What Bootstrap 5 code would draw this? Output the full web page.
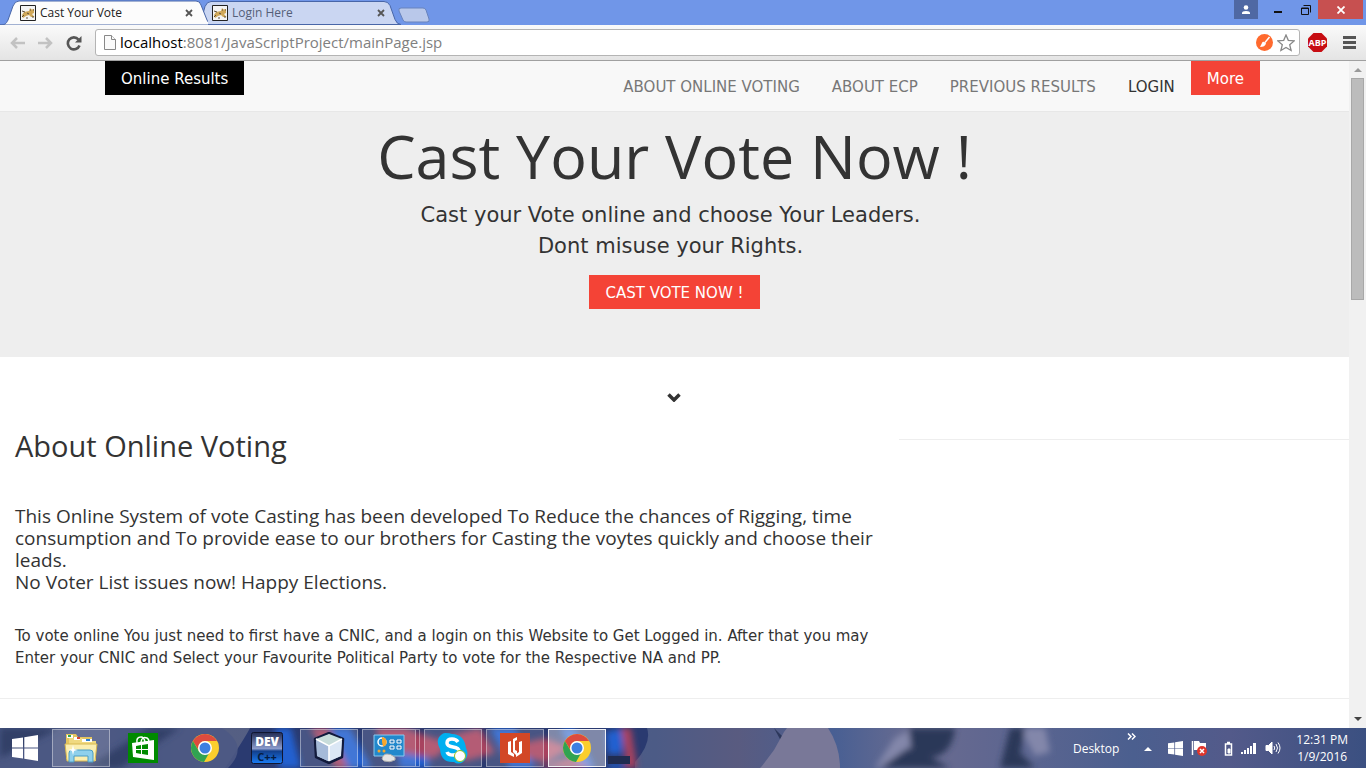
<!DOCTYPE html>
<html lang="en">
<head>
<meta charset="utf-8">
<meta name="viewport" content="width=device-width, initial-scale=1">
<title>Cast Your Vote</title>
<link rel="stylesheet" href="https://cdn.jsdelivr.net/npm/bootstrap@5.3.0/dist/css/bootstrap.min.css">
<style>
:root{--ui:"Open Sans","Noto Sans",sans-serif;--read:"DejaVu Sans",Verdana,sans-serif;--red:#f44336}
body{font-family:var(--read);font-size:15px;line-height:22px;color:#333;background:#fff}
svg{display:block;flex-shrink:0}
button{border:0;background:none;padding:0;color:inherit}
a{text-decoration:none;color:inherit}

/* window frame */
.tabstrip{background:#7096e8;height:25px;font:12px/16px var(--ui)}
.tab{width:208px;height:25px;margin-right:-16px;padding:5px 15px 0 20px;color:#222;isolation:isolate}
.tab.idle{color:#555f78}
.tab.front{z-index:2}
.tab .shape{position:absolute;left:0;top:0;z-index:-1}
.newtab{margin:5px 0 0 14px}
.winbtn{width:24px;height:19px;display:flex;align-items:center;justify-content:center}
.winbtn.person{background:#4f68a3}
.winbtn.shut{width:45px;background:#c75050}
.winset{padding-right:3px}
.toolbar{height:36px;background:linear-gradient(#fafafa,#e4e4e4);border-bottom:1px solid #a0a0a0;padding:0 10px}
.address{height:27px;border:1px solid #b4b4b4;border-radius:3px;background:#fff}
.address .url{font:15px/20px var(--ui);color:#808080;padding-bottom:2px}
.address .url b{font-weight:400;color:#000}

/* page */
.sitenav{height:51px;background:#f8f8f8;border-bottom:1px solid #e7e7e7;padding:0 89px 0 105px}
.flatbtn{height:34px;padding:2px 16px 0;border-radius:0;line-height:32px;color:#fff;background:var(--red)}
.flatbtn.dark{background:#000}
.sitenav .link{padding:15px 16px 0;color:#777}
.sitenav .link.now{color:#333}
.hero{background:#eee;height:245px;padding-top:6px}
.hero h1{font:400 61px/76px var(--ui);margin:0 0 6px}
.hero .say{font-size:21px;line-height:31px;margin:0 8px 13px 0}
.downmark{padding:36px 0 0 667px}
.about{padding:22px 15px 0}
.about h2{font:400 29px/44px var(--ui);margin:0 0 37px}
.about h4{font:400 19px/22px var(--ui);margin:0 0 32px}
.about p{margin:0 0 29px}
.rule{border-top:1px solid #eee}
.siderule{padding-top:37px}
.track{width:17px;background:#f1f1f1}
.track .thumb{width:13px;height:222px;background:#bcbcbc;border:1px solid #a8a8a8}

/* taskbar */
.taskbar{height:40px;color:#fff;font:12px/17px var(--ui);background:#46557f;isolation:isolate}
.taskbar .scene{position:absolute;inset:0;width:100%;height:100%;z-index:-1}
.start{width:52px;padding-left:12px}
.task{width:58px;height:38px;display:flex;align-items:center;justify-content:center}
.task.open{border:1px solid #ffffff66;background:#ffffff24}
.task.active{border:1px solid #ffffffdd;background:#ffffff66}
.task.paired{width:54px}
.stack{width:4px;height:38px;border:1px solid #ffffff66;border-left:0}
.clock{margin:0 18px 0 15px}
</style>
</head>
<body class="vh-100 d-flex flex-column overflow-hidden">

<svg width="0" height="0" class="position-absolute" aria-hidden="true">
  <symbol id="tomcat" viewBox="0 0 16 16"><path fill="#f4f4f4" stroke="#222" d="M.5.5h15v15H.5z"/><path d="M2 10l2-3 5-1 1-3 1.500 1.500L14 4v4l-2 1 2.500 3H11l-2-2-3 1-3 2z" fill="#d0a85a"/><path d="M2 6l3 1M2 12l2-2M10 5h1m2 0h1M7 8l2 1M12 12h2M6 13h2" stroke="#5a4d3a" fill="none"/></symbol>
  <symbol id="cross" viewBox="0 0 8 8"><path d="M1 1l6 6M7 1L1 7" stroke="#555" stroke-width="1.800"/></symbol>
  <symbol id="chrome" viewBox="0 0 30 30"><circle cx="15" cy="15" r="14" fill="#fbce2d"/><path d="M2.9 8A14 14 0 0 1 27.100 8H15a7 7 0 0 0-6.500 9z" fill="#dd4b3e"/><path d="M2.900 8A14 14 0 0 0 14 29l6-10.500a7 7 0 0 1-11.500-1z" fill="#31a352"/><circle cx="15" cy="15" r="7" fill="#fff"/><circle cx="15" cy="15" r="5.500" fill="#3c7fe0"/></symbol>
  <symbol id="win" viewBox="0 0 26 26"><path fill="#fff" d="M0 4l11-1.600V12.400H0zM12.300 2.200L26 0v12.400H12.300zM0 13.600h11v10L0 22zM12.300 13.600H26V26l-13.700-2.200z"/></symbol>
</svg>

<header>
  <div class="tabstrip d-flex">
    <div class="d-flex flex-grow-1">
      <button class="tab front position-relative d-flex align-items-start text-start">
        <svg class="shape" width="208" height="25"><path d="M0 25c5 0 6-1 8-5l5-14q2-5 6-5h177q4 0 5 4l6 15q2 5 5 5z" fill="#fcfcfc" stroke="#4866a8"/></svg>
        <svg width="16" height="16"><use href="#tomcat"/></svg><span class="ms-1 flex-grow-1">Cast Your Vote</span><svg width="8" height="8" class="mt-1"><use href="#cross"/></svg>
      </button>
      <button class="tab idle position-relative d-flex align-items-start text-start">
        <svg class="shape" width="210" height="25"><path d="M8 24.500l5-18q2-5 6-5h173q4 0 6 4l5 14q2 5 6 5z" fill="#cad6f2" stroke="#4866a8"/></svg>
        <svg width="16" height="16"><use href="#tomcat"/></svg><span class="ms-1 flex-grow-1">Login Here</span><svg width="8" height="8" class="mt-1"><use href="#cross"/></svg>
      </button>
      <button class="newtab" aria-label="New tab"><svg width="32" height="16"><path d="M3 1h22q2 0 3 2l3 9q1 3-2 3H8q-2 0-3-2L1 4q-1-3 2-3z" fill="#b9c8ea" stroke="#6883bd"/></svg></button>
    </div>
    <div class="winset d-flex">
      <button class="winbtn person me-2" aria-label="Profile"><svg width="10" height="10"><circle cx="5" cy="2.500" r="2.300" fill="#fff"/><path d="M1 9V8q0-2 4-2t4 2v1z" fill="#fff"/></svg></button>
      <button class="winbtn" aria-label="Minimize"><svg width="8" height="6"><path d="M0 4h8v2H0z" fill="#111"/></svg></button>
      <button class="winbtn ms-1" aria-label="Restore"><svg width="10" height="10" fill="none" stroke="#111"><path d="M.5 3h7v6.500h-7z"/><path d="M.5 3.500h7M2.500.5h7v7"/></svg></button>
      <button class="winbtn shut" aria-label="Close"><svg width="8" height="8"><path d="M.5.5l7 7M7.500.5l-7 7" stroke="#fff" stroke-width="1.800"/></svg></button>
    </div>
  </div>
  <div class="toolbar d-flex align-items-center">
    <button aria-label="Back"><svg width="16" height="12" fill="none" stroke="#c2c2c2" stroke-width="2.500"><path d="M15 6H2M7 1L2 6l5 5"/></svg></button>
    <button class="ms-2 ps-1" aria-label="Forward"><svg width="16" height="12" fill="none" stroke="#c2c2c2" stroke-width="2.500"><path d="M0 6h13M8 1l5 5-5 5"/></svg></button>
    <button class="ms-2 ps-1 me-1" aria-label="Reload"><svg width="17" height="16"><path d="M13.500 10.500A6 6 0 1 1 12.500 4.500" fill="none" stroke="#555" stroke-width="2.600"/><path d="M15.500 1v6.500H9z" fill="#555"/></svg></button>
    <div class="address d-flex align-items-center flex-grow-1 px-1 ms-2">
      <svg width="12" height="15" class="ms-1 me-1" fill="#fafafa" stroke="#888"><path d="M.5.5h7l4 4v10H.5z"/><path d="M7.500.5v4h4"/></svg>
      <span class="url flex-grow-1"><b>localhost</b>:8081/JavaScriptProject/mainPage.jsp</span>
      <svg width="17" height="17"><circle cx="8.500" cy="8.500" r="8.500" fill="#ff6a2e"/><path d="M13.500 3L9 8.500" stroke="#fff" stroke-width="1.500"/><path d="M4 13l2.500-5q2-1 3.500 1.500Q9 13 4 13z" fill="#fff"/></svg>
      <svg width="18" height="18" class="ms-1"><path d="M9 1l2.300 5.300 5.900.6-4.500 3.800 1.400 5.800L9 13.400l-5.100 3.100 1.400-5.800L.8 6.900l5.900-.6z" fill="#fff" stroke="#888" stroke-width="1.300"/></svg>
    </div>
    <button class="ms-2" aria-label="Ad blocker"><svg width="19" height="19"><path d="M5.500 0h8L19 5.500v8L13.500 19h-8L0 13.500v-8z" fill="#c70d12"/><text x="9.500" y="13" text-anchor="middle" font-family="Open Sans" font-size="9" font-weight="700" fill="#fff">ABP</text></svg></button>
    <button class="ms-3" aria-label="Menu"><svg width="13" height="13" fill="#555"><path d="M0 0h13v3H0zM0 5h13v3H0zM0 10h13v3H0z"/></svg></button>
  </div>
</header>

<div class="d-flex flex-grow-1 overflow-hidden">
  <main class="flex-grow-1">
    <nav class="sitenav d-flex justify-content-between align-items-start">
      <button class="flatbtn dark">Online Results</button>
      <div class="d-flex align-items-start">
        <a class="link" href="#about">ABOUT ONLINE VOTING</a>
        <a class="link" href="#ecp">ABOUT ECP</a>
        <a class="link" href="#previous">PREVIOUS RESULTS</a>
        <a class="link now" href="#login">LOGIN</a>
        <button class="flatbtn">More</button>
      </div>
    </nav>
    <section class="hero text-center">
      <h1>Cast Your Vote Now !</h1>
      <p class="say">Cast your Vote online and choose Your Leaders.<br>Dont misuse your Rights.</p>
      <button class="flatbtn">CAST VOTE NOW !</button>
    </section>
    <div class="downmark"><svg width="14" height="9"><path d="M1.500 1.500L7 7l5.500-5.500" fill="none" stroke="#333" stroke-width="3.500"/></svg></div>
    <div class="row g-0">
      <section class="col-8 about" id="about">
        <h2>About Online Voting</h2>
        <h4>This Online System of vote Casting has been developed To Reduce the chances of Rigging, time consumption and To provide ease to our brothers for Casting the voytes quickly and choose their leads.<br>No Voter List issues now! Happy Elections.</h4>
        <p>To vote online You just need to first have a CNIC, and a login on this Website to Get Logged in. After that you may Enter your CNIC and Select your Favourite Political Party to vote for the Respective NA and PP.</p>
      </section>
      <div class="col-4 siderule"><div class="rule"></div></div>
    </div>
    <div class="rule"></div>
  </main>
  <div class="track d-flex flex-column align-items-center flex-shrink-0 py-1">
    <svg width="8" height="13"><path d="M0 7l4-4 4 4z" fill="#999"/></svg>
    <div class="thumb flex-shrink-0"></div>
    <svg width="8" height="10" class="mt-auto"><path d="M0 3h8L4 7z" fill="#444"/></svg>
  </div>
</div>

<footer class="taskbar position-relative d-flex align-items-center flex-shrink-0">
  <svg class="scene" viewBox="0 0 1366 40" preserveAspectRatio="none" aria-hidden="true">
    <defs>
      <linearGradient id="sky"><stop stop-color="#34466f"/><stop offset=".06" stop-color="#4c5984"/><stop offset=".11" stop-color="#3d4b75"/><stop offset=".16" stop-color="#555f83"/><stop offset=".48" stop-color="#4c5b86"/><stop offset=".54" stop-color="#595b80"/><stop offset=".61" stop-color="#485f93"/><stop offset=".67" stop-color="#6a6c90"/><stop offset=".72" stop-color="#616790"/><stop offset=".83" stop-color="#4b5f8f"/><stop offset=".9" stop-color="#535a8a"/><stop offset="1" stop-color="#3b5081"/></linearGradient>
      <filter id="soft" x="-20%" y="-50%" width="140%" height="200%"><feGaussianBlur stdDeviation="3"/></filter>
    </defs>
    <path d="M0 0h1366v40H0z" fill="url(#sky)"/>
    <path d="M0 40h225Q245 10 250 0h397q5 15-12 34v6z" fill="#2a3a70"/>
    <path d="M0 40h228Q250 18 222 0H0z" fill="#4c5984" opacity=".9"/>
    <g filter="url(#soft)">
      <path d="M85 40L150 0h30l-60 40zM0 0h60L0 30z" fill="#303f68"/>
      <path d="M275 0h16l10 40h-22zM330 0h20l22 40h-25zM395 10l30 5 5 25h-30zM490 0h25l20 40h-25zM560 0h15l20 40h-15zM606 4l18-4-2 26h-14zM608 35h16v5h-16z" fill="#2461d0"/>
      <path d="M310 0h18l20 40h-12zM375 0h30l45 16-15 14-50-8zM440 10l40-10 15 25-30 8zM500 20l45-10 25 10-25 15zM535 40l35-10 20 10zM621 0h10l6 40h-12v-16z" fill="#a8435f"/>
      <path d="M895 10l15-8 5 20-20 18h-20zM1020 0h25l5 24-15 4z" fill="#8387aa"/>
      <path d="M909 0h46q-3 30-30 30-12 0-14-10zM880 40l28-20 20 8 22 12zM1010 0h15l-5 25 15 15h-35z" fill="#293858"/>
    </g>
    <path d="M774 0l9 9-2 4z" fill="#2d385c"/>
    <path d="M762 38l12-16 10-18 3-4h41q12 18 12 40h-80z" fill="#797898"/>
    <path d="M608 28h22v8h-22z" fill="#202c50"/>
  </svg>
  <button class="start" aria-label="Start"><svg width="26" height="26"><use href="#win"/></svg></button>
  <div class="d-flex flex-grow-1 gap-1">
    <button class="task open" aria-label="File Explorer"><svg width="34" height="30"><path d="M2 1h10l2 3h14v22H2z" fill="#e3c45f"/><path d="M3 2h6v3H3z" fill="#fff"/><path d="M4 2h3v2H4z" fill="#2fa84f"/><path d="M8 5h10l2 3h12v20H5V5z" fill="#f0d980"/><path d="M10 4h6v3h-6z" fill="#fff"/><path d="M13 4h3v2h-3z" fill="#d8452e"/><path d="M18 6h10v3H18z" fill="#fff"/><path d="M22 6h4v2h-4z" fill="#2d7fd0"/><path d="M1 11h32l-2 17H3z" fill="#fbeeb0" stroke="#d8b850"/><path d="M5 29V20q0-3 3-3h18q3 0 3 3v9h-5v-6H10v6z" fill="#8fd0ec" stroke="#4a9cc4"/><path d="M9 12l1 4 4 1-4 1-1 4-1-4-4-1 4-1z" fill="#fff"/></svg></button>
    <button class="task" aria-label="Store"><svg width="30" height="30"><path d="M0 0h30v30H0z" fill="#008a00"/><path d="M4 10l22-3v20L5 24z" fill="#fff"/><path d="M9 10q-1-6 4-6 3 0 4 5M13 9q1-6 6-4 2 1 2 4" fill="none" stroke="#fff" stroke-width="1.500"/><path d="M8 13l5-1v4H8zm6-1l6-1v5h-6zM8 17h5v4l-5-1zm6 0h6v5l-6-1z" fill="#008a00"/></svg></button>
    <button class="task" aria-label="Chrome"><svg width="30" height="30"><use href="#chrome"/></svg></button>
    <button class="task" aria-label="Dev-C++"><svg width="32" height="32"><defs><linearGradient id="dev" x2="0" y2="1"><stop stop-color="#222c55"/><stop offset=".52" stop-color="#8b9ccc"/><stop offset=".6" stop-color="#123f8c"/><stop offset="1" stop-color="#1a7cf5"/></linearGradient></defs><rect x=".5" y=".5" width="31" height="31" rx="2" fill="url(#dev)" stroke="#101630"/><text x="16" y="14" text-anchor="middle" font-family="Open Sans" font-size="12" font-weight="800" fill="#fff">DEV</text><text x="16" y="29" text-anchor="middle" font-family="Open Sans" font-size="11" font-weight="700" fill="#051c40">C++</text></svg></button>
    <button class="task open" aria-label="NetBeans"><svg width="32" height="32"><path d="M16 1l14 6-1 18-13 6L3 25 2 7z" fill="#b8cae0" stroke="#111a3c" stroke-width="2.500" stroke-linejoin="round"/><path d="M16 2l13 5-13 7L3 7z" fill="#c7dcda"/><path d="M3 8l12 6v15L4 24z" fill="#a5bad9"/><path d="M29 8l-13 6v15l12-5z" fill="#dbe7f5"/><path d="M3 7l13 7 13-7M16 14v15" fill="none" stroke="#fff" stroke-width="1.500"/></svg></button>
    <div class="d-flex"><button class="task open paired" aria-label="Control Panel"><svg width="32" height="30"><path d="M1 2h30v21H1z" fill="#2288cc" stroke="#8ac9ef"/><circle cx="9" cy="9" r="4" fill="none" stroke="#fff" stroke-width="1.500"/><path d="M9 9V4a5 5 0 0 1 1 9.800z" fill="#f5a62c"/><path d="M17 7h4v3h-4zm7 0h4v3h-4zm-7 6h4v3h-4zm7 0h4v3h-4z" fill="#2a7ab8" stroke="#fff"/><circle cx="6" cy="18" r="1.500" fill="#f5a62c"/><circle cx="11" cy="18" r="1.500" fill="#f5a62c"/><path d="M9 26q1-5 5-5t6 2q3 1 2 4-5 3-11 1z" fill="#e4e4e4" stroke="#aaa"/></svg></button><span class="stack"></span></div>
    <button class="task open" aria-label="Skype"><svg width="32" height="32"><path d="M8 1q5 0 7 1 12 0 14 14 4 8-3 14-5 3-9 0Q4 31 3 17-2 8 4 3q2-2 4-2z" fill="#00aff0"/><path d="M21 10q-2-3-6-3-5 0-5 4 0 3 6 4t6 4q0 4-6 4-5 0-6-3" fill="none" stroke="#fff" stroke-width="3.500"/><circle cx="23" cy="24" r="5.500" fill="#fff" stroke="#8fc31f"/></svg></button>
    <button class="task open" aria-label="Reader"><svg width="30" height="30"><path d="M0 0h30v30H0z" fill="#d24726"/><path d="M8 9l3-1v11l3 2v3l-6-3zM13 6l4-2v3l-2 1v9l2 1v5l-4-4zM19 9l3-1v12l-6 4v-3l3-2z" fill="#fff"/></svg></button>
    <button class="task active" aria-label="Chrome window"><svg width="30" height="30"><use href="#chrome"/></svg></button>
  </div>
  <span>Desktop</span>
  <svg width="9" height="7" class="ms-2 mb-4" fill="none" stroke="#fff" stroke-width="1.500"><path d="M1 .5l3 3-3 3M5 .5l3 3-3 3"/></svg>
  <svg width="8" height="5" class="ms-2 me-3"><path d="M0 5l4-4 4 4z" fill="#fff"/></svg>
  <svg width="15" height="15"><use href="#win"/></svg>
  <svg width="17" height="16" class="ms-2"><path d="M1.500 1v14" stroke="#fff" stroke-width="1.500"/><path d="M3 1h5l1 2h6v7H3z" fill="#fff"/><circle cx="11" cy="11" r="5" fill="#e0352b"/><path d="M9 9l4 4m0-4l-4 4" stroke="#fff" stroke-width="1.500"/></svg>
  <svg width="9" height="15" class="ms-3" fill="none" stroke="#fff"><path d="M3 1.500h3M1.500 3h6v11h-6z" stroke-width="1.500"/><path d="M4 8h2v4H4z" fill="#fff"/></svg>
  <svg width="16" height="12" class="ms-2" fill="#fff"><path d="M0 10h2v2H0zM3 8h2v4H3zM6 6h2v6H6zM9 4h2v8H9zM12 1h3v11h-3z"/></svg>
  <svg width="16" height="14" class="ms-2" fill="none" stroke="#fff"><path d="M1 4.500h2.500L7 1v12L3.500 9.500H1z" fill="#fff"/><path d="M9 5q1.500 2 0 4M11 3q3 4 0 8M13 1.500q4 5.500 0 11"/></svg>
  <div class="clock text-center">12:31 PM<br>1/9/2016</div>
</footer>
<script src="https://cdn.jsdelivr.net/npm/bootstrap@5.3.0/dist/js/bootstrap.bundle.min.js"></script>
</body>
</html>
